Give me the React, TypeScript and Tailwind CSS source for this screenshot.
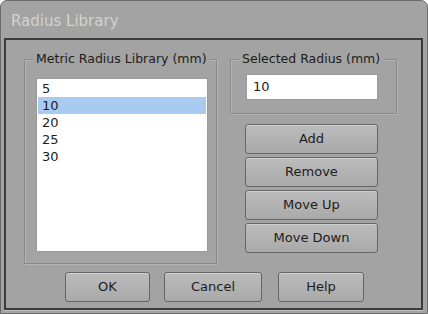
const items = ["5", "10", "20", "25", "30"];

function Btn({ label, className }: { label: string; className: string }) {
  return (
    <button
      className={`flex items-center justify-center rounded-[3px] border border-[#666] bg-gradient-to-b from-[#bcbcbc] to-[#a9a9a9] text-[13px] text-[#1c1c1c] shadow-[inset_0_1px_0_#d0d0d0] ${className}`}
    >
      {label}
    </button>
  );
}

function Group({ label, className, children }: { label: string; className: string; children: React.ReactNode }) {
  return (
    <div className={`relative border border-[#8a8a8a] shadow-[1px_1px_0_#b4b4b4,inset_1px_1px_0_#b4b4b4] ${className}`}>
      <span className="absolute -top-[10px] left-[8px] whitespace-nowrap bg-[#a3a3a3] px-[3px] text-[12.5px] leading-[18px] text-[#1c1c1c]">
        {label}
      </span>
      {children}
    </div>
  );
}

export default function App() {
  return (
    <div
      className="flex h-[314px] w-[428px] flex-col rounded-t-[7px] border border-[#6a6a6a] bg-[#a3a3a3]"
      style={{ fontFamily: '"DejaVu Sans", sans-serif' }}
    >
      <div className="flex h-[37px] items-center pl-[10px] pt-[4px] text-[15px] text-[#d2d2d2]">Radius Library</div>
      <div className="ml-[3px] mr-[4px] flex h-[272px] flex-col border-2 border-[#3c3c3c] shadow-[0_1px_0_#c0c0c0]">
        <div className="flex pl-[18px] pt-[19px]">
          <Group label="Metric Radius Library (mm)" className="h-[205px] w-[193px]">
            <div className="ml-[11px] mt-[18px] h-[174px] w-[172px] border border-[#9a9a9a] bg-white p-px">
              {items.map((v) => (
                <div
                  key={v}
                  className={`h-[17px] pl-[4px] text-[13px] leading-[17px] text-[#1c1c1c] ${v === "10" ? "bg-[#a9cbf0]" : ""}`}
                >
                  {v}
                </div>
              ))}
            </div>
          </Group>
          <div className="ml-[13px] flex flex-col">
            <Group label="Selected Radius (mm)" className="h-[55px] w-[167px]">
              <div className="ml-[15px] mt-[14px] flex h-[26px] w-[132px] items-center border border-[#9a9a9a] bg-white pl-[6px] text-[13px] text-[#1c1c1c]">
                10
              </div>
            </Group>
            <div className="ml-[15px] mt-[10px] flex flex-col gap-[3px]">
              <Btn label="Add" className="h-[30px] w-[133px]" />
              <Btn label="Remove" className="h-[30px] w-[133px]" />
              <Btn label="Move Up" className="h-[30px] w-[133px]" />
              <Btn label="Move Down" className="h-[30px] w-[133px]" />
            </div>
          </div>
        </div>
        <div className="mt-[8px] flex pl-[59px]">
          <Btn label="OK" className="h-[30px] w-[85px]" />
          <Btn label="Cancel" className="ml-[14px] h-[30px] w-[98px]" />
          <Btn label="Help" className="ml-[16px] h-[30px] w-[86px]" />
        </div>
      </div>
    </div>
  );
}
